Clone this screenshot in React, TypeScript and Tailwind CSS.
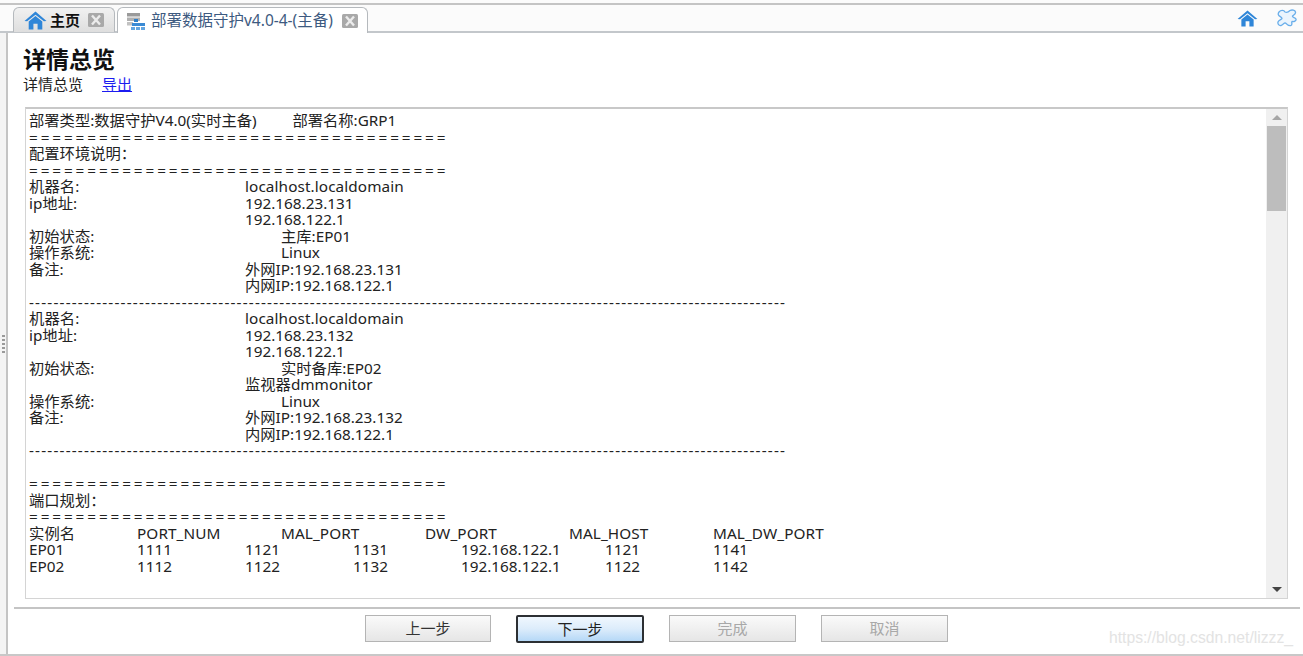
const eq = "====================================";
const dash = "----------------------------------------------------------------------------------------------------------------------------";
const lines: { text: string; kind?: "eq" | "dash" | "latin" }[] = [
  { text: "部署类型:数据守护V4.0(实时主备)         部署名称:GRP1" },
  { text: eq, kind: "eq" },
  { text: "配置环境说明：" },
  { text: eq, kind: "eq" },
  { text: "机器名:\t\t\t\t\tlocalhost.localdomain", kind: "latin" },
  { text: "ip地址:\t\t\t\t\t192.168.23.131" },
  { text: "\t\t\t\t\t\t192.168.122.1" },
  { text: "初始状态:\t\t\t\t\t\t主库:EP01" },
  { text: "操作系统:\t\t\t\t\t\tLinux" },
  { text: "备注:\t\t\t\t\t外网IP:192.168.23.131" },
  { text: "\t\t\t\t\t\t内网IP:192.168.122.1" },
  { text: dash, kind: "dash" },
  { text: "机器名:\t\t\t\t\tlocalhost.localdomain", kind: "latin" },
  { text: "ip地址:\t\t\t\t\t192.168.23.132" },
  { text: "\t\t\t\t\t\t192.168.122.1" },
  { text: "初始状态:\t\t\t\t\t\t实时备库:EP02" },
  { text: "\t\t\t\t\t\t监视器dmmonitor" },
  { text: "操作系统:\t\t\t\t\t\tLinux" },
  { text: "备注:\t\t\t\t\t外网IP:192.168.23.132" },
  { text: "\t\t\t\t\t\t内网IP:192.168.122.1" },
  { text: dash, kind: "dash" },
  { text: " " },
  { text: eq, kind: "eq" },
  { text: "端口规划：" },
  { text: eq, kind: "eq" },
  { text: "实例名\t\tPORT_NUM\t\tMAL_PORT\t\tDW_PORT\t\tMAL_HOST\t\tMAL_DW_PORT", kind: "latin" },
  { text: "EP01\t\t1111\t\t1121\t\t1131\t\t192.168.122.1\t\t1121\t\t1141" },
  { text: "EP02\t\t1112\t\t1122\t\t1132\t\t192.168.122.1\t\t1122\t\t1142" },
];

function Home({ className }: { className: string }) {
  return (
    <svg viewBox="0 0 22 18" className={className}>
      <path d="M11 0.5 L21.5 9.5 L19 9.8 L11 3.4 L3 9.8 L0.5 9.5 Z" fill="#2f86d8" />
      <path d="M4.5 10 L11 4.8 L17.5 10 V17.5 H13 V12 H9 V17.5 H4.5 Z" fill="#2f86d8" />
    </svg>
  );
}

function Close() {
  return (
    <svg viewBox="0 0 16 14" className="w-4 h-[14px] shrink-0">
      <rect width="16" height="14" rx="1.5" fill="#a9a9a9" />
      <path d="M4 2.5 L12 11.5 M12 2.5 L4 11.5" stroke="#ececec" strokeWidth="2.4" />
    </svg>
  );
}

function Db() {
  return (
    <svg viewBox="0 0 18 18" className="w-[18px] h-[18px] shrink-0">
      <rect x="0" y="1" width="13" height="3.5" fill="#9a9a9a" />
      <rect x="0" y="5.5" width="13" height="3.5" fill="#b0b0b0" />
      <rect x="0" y="10" width="6" height="3.5" fill="#c2c2c2" />
      <rect x="7" y="7" width="4" height="3" fill="#2d7fc9" />
      <rect x="5" y="11" width="13" height="3" fill="#3a8ad4" />
      <rect x="4" y="15" width="4" height="3" fill="#64a6e0" />
      <rect x="9" y="15" width="4" height="3" fill="#64a6e0" />
      <rect x="14" y="15" width="4" height="3" fill="#64a6e0" />
    </svg>
  );
}

function Puzzle() {
  return (
    <svg viewBox="0 0 20 18" className="w-5 h-[18px]" fill="#eaf4fd" stroke="#69aeea" strokeWidth="1.3" strokeLinejoin="round">
      <path d="M2 3 C4 .5 7 1 8 3 C10 4 12 2.5 13 1.5 C15 .5 18 1 18.5 3 C19 5 16.5 6 15.5 7 C15 8.5 18 8.5 19 10 C19.5 12 17 13 15 12.5 C14 13 16 15.5 14 16.5 C12 17.5 10 15.5 8.5 14 C7 13.5 6 16 4 16.5 C2 17 .5 15 1 13 C1.5 11 4.5 10.5 5 9.5 C5 8 2 7.5 1.5 6 C1 5 1.2 4 2 3 Z" />
    </svg>
  );
}

function Btn({ label, variant, narrow }: { label: string; variant?: "primary" | "disabled"; narrow?: boolean }) {
  if (variant === "primary")
    return (
      <button className="w-[128px] h-[28px] rounded-[2px] border-2 border-[#2c2f33] bg-gradient-to-b from-[#f0f7fe] via-[#dcecfb] to-[#b5d8f7] text-[15px] text-[#222]">
        {label}
      </button>
    );
  return (
    <button
      className={`${narrow ? "w-[126px]" : "w-[127px]"} h-[27px] border border-[#b4b4b4] bg-gradient-to-b from-[#fafafa] to-[#e6e6e6] text-[15px] ${
        variant === "disabled" ? "text-[#a8a8a8]" : "text-[#333]"
      }`}
    >
      {label}
    </button>
  );
}

export default function App() {
  return (
    <div className="relative flex flex-col w-[1303px] h-[656px] overflow-hidden bg-white font-['Noto_Sans','Noto_Sans_CJK_SC',sans-serif] text-[#222]">
      {/* tab strip */}
      <div className="h-[33px] shrink-0 flex items-end pl-[13px] border-b-2 border-[#c3c7cb] relative bg-[#fbfbfb] pr-[6px]">
        <div className="absolute left-0 right-0 top-[3px] h-[2px] bg-[#c4c4c4]" />
        <div className="h-[25px] -mb-[1px] w-[102px] flex items-center pl-[10px] gap-[3px] rounded-t-[6px] border border-[#b5b9bd] border-b-0 bg-gradient-to-b from-[#f1f1f1] to-[#dedede]">
          <Home className="w-[23px] h-[19px] shrink-0" />
          <span className="text-[15px] font-bold text-[#111] w-[30px] whitespace-nowrap">主页</span>
          <span className="ml-[5px] flex"><Close /></span>
        </div>
        <div className="h-[26px] -mb-[2px] ml-[2px] w-[251px] flex items-center pl-[9px] gap-[6px] rounded-t-[6px] border border-[#b5b9bd] border-b-0 bg-white relative z-10">
          <Db />
          <span className="text-[15.5px] text-[#3d5a80] whitespace-nowrap w-[183px]">部署数据守护v4.0-4-(主备)</span>
          <span className="ml-[2px] flex"><Close /></span>
        </div>
        <div className="ml-auto flex items-center gap-[19px] self-center mt-[5px]">
          <Home className="w-[21px] h-[17px]" />
          <Puzzle />
        </div>
      </div>

      <div className="flex flex-1 min-h-0">
        {/* left splitter */}
        <div className="w-[8px] shrink-0 flex items-center bg-[#f4f4f4] border-r-2 border-[#c4c4c4]">
          <div className="ml-[2px] w-[3px] h-[18px] bg-[repeating-linear-gradient(to_bottom,#9a9a9a_0_2px,transparent_2px_4px)]" />
        </div>

        <div className="flex-1 min-w-0 flex flex-col">
          <div className="pl-[15px] pt-[11px] h-[74px] shrink-0">
            <h1 className="text-[23px] leading-[30px] font-bold text-[#111]">详情总览</h1>
            <div className="text-[15px] leading-[20px] flex gap-[19px]">
              <span>详情总览</span>
              <a className="text-[#1c1cf0] underline">导出</a>
            </div>
          </div>

          {/* content box */}
          <div className="ml-[17px] mr-[15px] h-[492px] shrink-0 flex border border-[#d4d4d4] border-t-2 border-t-[#c8c8c8] overflow-hidden">
            <div className="flex-1 min-w-0 pl-[3px] pt-[3px] text-[15.3px] leading-[16.53px] text-[#222] overflow-hidden">
              {lines.map((l, i) => (
                <div
                  key={i}
                  className={`whitespace-pre h-[16.53px] [tab-size:36px] ${
                    l.kind === "eq"
                      ? "tracking-[2.9px]"
                      : l.kind === "dash"
                        ? "tracking-[1.18px]"
                        : l.kind === "latin"
                          ? "tracking-[0.1px]"
                          : ""
                  }`}
                >
                  {l.text}
                </div>
              ))}
            </div>
            <div className="w-[21px] shrink-0 bg-[#f0f0f0] flex flex-col items-center">
              <div className="h-[17px] shrink-0 flex items-center justify-center">
                <div className="w-0 h-0 border-x-[5px] border-x-transparent border-b-[5px] border-b-[#a6a6a6]" />
              </div>
              <div className="w-[19px] h-[85px] bg-[#bdbdbd]" />
              <div className="flex-1" />
              <div className="h-[18px] shrink-0 flex items-center justify-center">
                <div className="w-0 h-0 border-x-[5px] border-x-transparent border-t-[5px] border-t-[#444]" />
              </div>
            </div>
          </div>

          {/* footer */}
          <div className="mt-[8px] mr-[3px] ml-[6px] h-[47px] shrink-0 border-t-2 border-[#c4c4c4] flex items-start gap-[25px] pl-[351px] pt-[6px]">
            <Btn label="上一步" narrow />
            <Btn label="下一步" variant="primary" />
            <Btn label="完成" variant="disabled" />
            <Btn label="取消" variant="disabled" />
          </div>
        </div>
      </div>
      <div className="h-[2px] shrink-0 bg-[#c8c8c8]" />
      <div className="absolute right-[10px] bottom-[6px] text-[15.7px] text-[#e3e3e3] font-['Liberation_Sans',sans-serif]">https://blog.csdn.net/lizzz_</div>
    </div>
  );
}
